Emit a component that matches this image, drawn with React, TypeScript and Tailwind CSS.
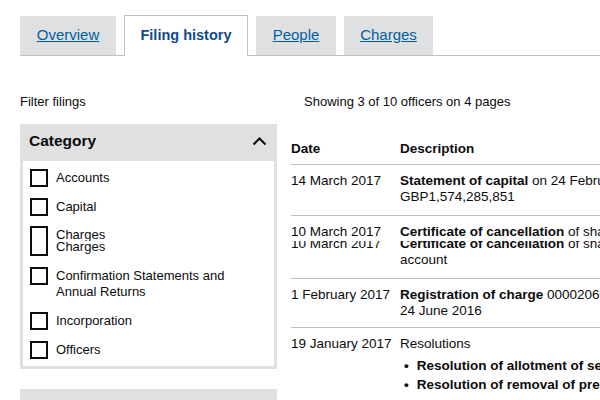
const FONT = "font-['Liberation_Sans',Arial,sans-serif]";

const TABS = [
  { label: 'Overview', width: 'w-[96px]' },
  { label: 'Filing history', width: 'w-[124px]', active: true },
  { label: 'People', width: 'w-[80px]' },
  { label: 'Charges', width: 'w-[89px]' },
];

const CATEGORIES = [
  'Accounts',
  'Capital',
  'Charges',
  'Confirmation Statements and\nAnnual Returns',
  'Incorporation',
  'Officers',
];

function Tabs() {
  return (
    <div className="mt-[15px] flex items-end gap-2 border-b border-[#bfc1c3]">
      {TABS.map(t =>
        t.active ? (
          <div
            key={t.label}
            className={`${t.width} -mb-px flex h-[41px] items-center justify-center border border-b-0 border-[#bfc1c3] bg-white text-[14.5px] font-bold text-[#104a8e]`}
          >
            {t.label}
          </div>
        ) : (
          <div
            key={t.label}
            className={`${t.width} flex h-[39px] items-center justify-center bg-[#dee0e2] text-[15px] text-[#005ea5] underline`}
          >
            {t.label}
          </div>
        )
      )}
    </div>
  );
}

function Checkbox({ label }: { label: string }) {
  const lines = label.split('\n');
  return (
    <div className={`flex items-start gap-2 ${lines.length > 1 ? 'pb-[2px]' : ''}`}>
      <span className="h-[18px] w-[18px] flex-shrink-0 border-2 border-[#0b0c0c] bg-white" />
      <span className="pt-px text-[13px] leading-[16px]">
        {lines.map((l, i) => (
          <span key={i} className="block">{l}</span>
        ))}
      </span>
    </div>
  );
}

function FilterPanel({ title, open, children }: { title: string; open?: boolean; children?: React.ReactNode }) {
  return (
    <div>
      <div className="flex h-[37px] items-start justify-between bg-[#dee0e2] px-[9px] pt-[7px]">
        <span className="text-[15.5px] leading-[19px] font-bold">{title}</span>
        {open && (
          <svg width="15" height="9" viewBox="0 0 15 9" className="mt-[6px] mr-[1px]">
            <path d="M1.5 7.5 L7.5 1.5 L13.5 7.5" fill="none" stroke="#0b0c0c" strokeWidth="2" />
          </svg>
        )}
      </div>
      {open && (
        <div className="flex flex-col gap-[10.5px] border-[3px] border-t-0 border-[#dee0e2] pt-2 pb-[7px] pl-[7px]">
          {children}
        </div>
      )}
    </div>
  );
}

const ROWS: { date: string; desc: React.ReactNode; pb: string }[] = [
  {
    date: '14 March 2017',
    pb: 'pb-[10px]',
    desc: (
      <>
        <b>Statement of capital</b> on 24 February 2017
        <br />
        GBP1,574,285,851
      </>
    ),
  },
  {
    date: '10 March 2017',
    pb: 'pb-[10px]',
    desc: (
      <>
        <b>Certificate of cancellation</b> of share premium
        <br />
        account
      </>
    ),
  },
  {
    date: '1 February 2017',
    pb: 'pb-[8px]',
    desc: (
      <>
        <b>Registration of charge</b> 000020699001, created on
        <br />
        24 June 2016
      </>
    ),
  },
  {
    date: '19 January 2017',
    pb: 'pb-[10px]',
    desc: (
      <>
        Resolutions
        <ul className="mt-[6px] mb-[2px] flex flex-col gap-[3px] font-bold">
          <li className="flex gap-[8px] pl-[4px]"><span>•</span>Resolution of allotment of securities</li>
          <li className="flex gap-[8px] pl-[4px]"><span>•</span>Resolution of removal of pre-emption rights</li>
        </ul>
      </>
    ),
  },
];

function FilingTable() {
  return (
    <div className="mt-[31px] w-[420px] text-[13.5px] leading-[16px] whitespace-nowrap">
      <div className="flex border-b border-[#bfc1c3] pb-[7px] font-bold">
        <div className="w-[109px]">Date</div>
        <div>Description</div>
      </div>
      {ROWS.map(r => (
        <div key={r.date} className={`flex border-b border-[#bfc1c3] pt-2 ${r.pb}`}>
          <div className="w-[109px] flex-shrink-0">{r.date}</div>
          <div>{r.desc}</div>
        </div>
      ))}
    </div>
  );
}

function Page() {
  return (
    <div className={`w-[600px] pl-[20px] text-[#0b0c0c] ${FONT}`}>
      <Tabs />
      <div className="mt-[38px] flex">
        <div className="w-[257px] flex-shrink-0">
          <p className="text-[13px] leading-[16px]">Filter filings</p>
          <div className="mt-[14px] flex flex-col gap-[20px]">
            <FilterPanel title="Category" open>
              {CATEGORIES.map(c => (
                <Checkbox key={c} label={c} />
              ))}
            </FilterPanel>
            <FilterPanel title="Date" />
          </div>
        </div>
        <div className="ml-[14px] flex-shrink-0">
          <p className="pl-[13px] text-[13px] leading-[16px]">Showing 3 of 10 officers on 4 pages</p>
          <FilingTable />
        </div>
      </div>
    </div>
  );
}

export default function App() {
  // the capture repeats a 12px strip at y=241, so the page is drawn twice
  return (
    <div className="h-[400px] w-[600px] overflow-hidden bg-white">
      <div className="h-[241px] overflow-hidden">
        <Page />
      </div>
      <div className="h-[159px] overflow-hidden">
        <div className="-mt-[229px]">
          <Page />
        </div>
      </div>
    </div>
  );
}
